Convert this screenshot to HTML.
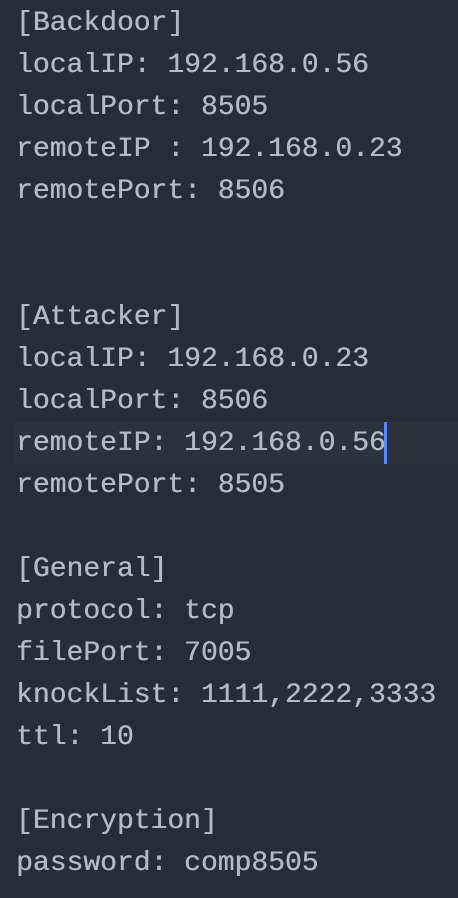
<!DOCTYPE html><html><head><style>
body{margin:0;background:#282c34;width:458px;height:898px;overflow:hidden}
.c{position:absolute;top:3px;left:16px;font:28px/42px "Liberation Mono",monospace;color:#b3bac6;white-space:pre;text-shadow:0.4px 0 0 #b3bac6}
.hl{position:absolute;left:14px;right:0;top:422px;height:42px;background:#2c313a}
.cur{position:absolute;left:384px;top:422px;width:3px;height:42px;background:#528bff}
</style></head><body>
<div class="hl"></div><div class="cur"></div>
<div class="c">[Backdoor]
localIP: 192.168.0.56
localPort: 8505
remoteIP : 192.168.0.23
remotePort: 8506


[Attacker]
localIP: 192.168.0.23
localPort: 8506
remoteIP: 192.168.0.56
remotePort: 8505

[General]
protocol: tcp
filePort: 7005
knockList: 1111,2222,3333
ttl: 10

[Encryption]
password: comp8505</div>
</body></html>
